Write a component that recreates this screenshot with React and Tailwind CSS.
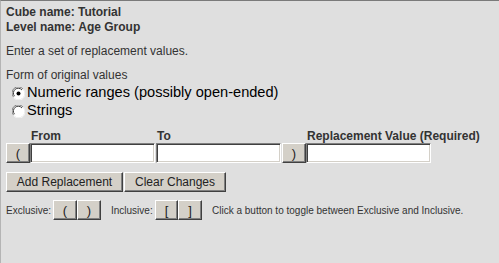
import { useState } from "react";

function Radio({ checked, onClick }) {
    return (
        <svg width="13" height="13" viewBox="0 0 13 13" onClick={onClick} className="shrink-0 cursor-default">
            <circle cx="6.5" cy="6.5" r="6" fill="#ffffff" />
            <path d="M11 2 A6 6 0 0 0 1.5 10" fill="none" stroke="#808080" strokeWidth="1" />
            <path d="M10 3 A4.8 4.8 0 0 0 2.5 9.2" fill="none" stroke="#404040" strokeWidth="1" />
            <path d="M2 11 A6 6 0 0 0 11.5 2.5" fill="none" stroke="#f4f4f4" strokeWidth="1" />
            {checked && <circle cx="6.5" cy="6.5" r="2" fill="#000000" />}
        </svg>
    );
}

const btn =
    "h-[20px] bg-[#d4d0c8] border border-t-white border-l-white border-r-[#404040] border-b-[#404040] shadow-[inset_-1px_-1px_0_#808080] flex items-center justify-center text-[#222] leading-none";

const field =
    "h-[20px] w-[125px] bg-white border border-t-[#808080] border-l-[#808080] border-r-white border-b-white shadow-[inset_1px_1px_0_#404040,inset_-1px_-1px_0_#d4d0c8] px-1 text-[12px] outline-none";

export default function App() {
    const [form, setForm] = useState("numeric");

    return (
        <main className="w-[499px] h-[263px] overflow-hidden bg-[#dfdfdf] border-t border-t-[#7a7a7a] border-l border-l-[#b4b4b4] pl-[5px] pt-[4px] text-[#333] font-['Liberation_Sans',Arial,sans-serif]">

            {/* Header */}
            <div className="text-[12px] font-bold leading-[15px]">
                <p>Cube name: Tutorial</p>
                <p>Level name: Age Group</p>
            </div>

            <p className="mt-[9px] text-[12px] leading-[15px]">Enter a set of replacement values.</p>

            {/* Form of values */}
            <p className="mt-[9px] text-[12px] leading-[15px]">Form of original values</p>
            <div className="mt-[1px] text-[14.6px] text-black">
                <label className="flex items-center h-[18px] pl-[6px] gap-[2px]" onClick={() => setForm("numeric")}>
                    <Radio checked={form === "numeric"} />
                    <span>Numeric ranges (possibly open-ended)</span>
                </label>
                <label className="flex items-center h-[18px] pl-[6px] gap-[2px]" onClick={() => setForm("strings")}>
                    <Radio checked={form === "strings"} />
                    <span>Strings</span>
                </label>
            </div>

            {/* Labels */}
            <div className="mt-[9px] flex text-[12px] font-bold leading-[14px]">
                <div className="w-[24px]" />
                <div className="w-[126px] pl-[1px]">From</div>
                <div className="w-[150px] pl-[1px]">To</div>
                <div className="pl-[1px]">Replacement Value (Required)</div>
            </div>

            {/* Inputs */}
            <div className="flex items-center">
                <button className={`${btn} w-[24px] text-[13px]`}>(</button>
                <input className={field} />
                <input className={`${field} ml-[1px]`} />
                <button className={`${btn} w-[24px] ml-[1px] text-[13px]`}>)</button>
                <input className={field} />
            </div>

            {/* Actions */}
            <div className="mt-[9px] flex gap-[1px] text-[12px]">
                <button className={`${btn} w-[117px]`}>Add Replacement</button>
                <button className={`${btn} w-[102px]`}>Clear Changes</button>
            </div>

            {/* Toggle help */}
            <div className="mt-[8px] flex items-center text-[10px]">
                <span className="w-[47px]">Exclusive:</span>
                <button className={`${btn} w-[24px] text-[13px]`}>(</button>
                <button className={`${btn} w-[24px] text-[13px]`}>)</button>
                <span className="ml-[10px] w-[44px]">Inclusive:</span>
                <button className={`${btn} w-[23px] text-[13px]`}>[</button>
                <button className={`${btn} w-[24px] text-[13px]`}>]</button>
                <span className="ml-[10px]">Click a button to toggle between Exclusive and Inclusive.</span>
            </div>
        </main>
    );
}
